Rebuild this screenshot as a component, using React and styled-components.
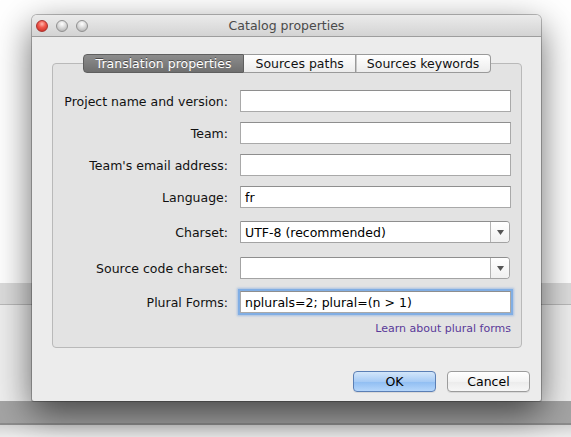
import React from 'react';
import styled, { createGlobalStyle } from 'styled-components';

const GlobalStyle = createGlobalStyle`
  html, body {
    margin: 0;
    padding: 0;
  }
  body {
    width: 571px;
    height: 437px;
    overflow: hidden;
    font-family: "DejaVu Sans", "Liberation Sans", sans-serif;
    background: linear-gradient(
      to bottom,
      #ffffff 0px,
      #ffffff 283px,
      #dcdcdc 283px,
      #dcdcdc 304px,
      #b9b9b9 304px,
      #b9b9b9 305px,
      #eeeeee 305px,
      #eeeeee 401px,
      #a4a4a4 401px,
      #a4a4a4 423px,
      #8c8c8c 423px,
      #8c8c8c 425px,
      #d4d4d4 425px,
      #ececec 437px
    );
  }
`;

const Desktop = styled.div`
  padding: 15px 0 0 32px;
`;

const Window = styled.div`
  width: 509px;
  height: 386px;
  display: flex;
  flex-direction: column;
  background: #ececec;
  border-radius: 5px 5px 2px 2px;
  box-shadow: 0 0 0 1px rgba(0, 0, 0, 0.25), 0 12px 36px rgba(0, 0, 0, 0.6);
  overflow: hidden;
`;

const TitleBar = styled.div`
  height: 22px;
  flex: none;
  display: flex;
  align-items: center;
  position: relative;
  padding-left: 4px;
  background: linear-gradient(to bottom, #ebebeb, #d3d3d3);
  border-bottom: 1px solid #9d9d9d;
  box-sizing: border-box;
`;

const Lights = styled.div`
  display: flex;
  gap: 8px;
`;

const Light = styled.span`
  width: 12px;
  height: 12px;
  border-radius: 50%;
  box-sizing: border-box;
  border: 1px solid ${(p) => (p.$red ? '#a8312e' : '#8f8f8f')};
  background: ${(p) =>
    p.$red
      ? 'radial-gradient(circle at 50% 30%, #ffb6ae 0%, #f15a4e 40%, #c5241c 100%)'
      : 'radial-gradient(circle at 50% 30%, #ffffff 0%, #d9d9d9 45%, #a9a9a9 100%)'};
`;

const Title = styled.div`
  position: absolute;
  left: 0;
  right: 0;
  text-align: center;
  font-size: 12.5px;
  color: #4a4a4a;
  pointer-events: none;
`;

const Body = styled.div`
  flex: 1;
  display: flex;
  flex-direction: column;
  padding: 17px 11px 9px 20px;
`;

const Tabs = styled.div`
  display: flex;
  justify-content: center;
  margin-bottom: -10px;
  margin-right: 8px;
  position: relative;
  z-index: 1;
`;

const Tab = styled.div`
  height: 19px;
  box-sizing: border-box;
  display: flex;
  align-items: center;
  justify-content: center;
  font-size: 12.5px;
  padding: 0 ${(p) => p.$pad}px;
  border: 1px solid ${(p) => (p.$active ? '#5f5f5f' : '#9a9a9a')};
  border-left-width: ${(p) => (p.$first ? 1 : 0)}px;
  color: ${(p) => (p.$active ? '#ffffff' : '#111')};
  text-shadow: ${(p) => (p.$active ? '0 -1px 0 rgba(0,0,0,0.45)' : 'none')};
  background: ${(p) =>
    p.$active
      ? 'linear-gradient(to bottom, #8d8d8d, #6f6f6f)'
      : 'linear-gradient(to bottom, #ffffff, #ececec)'};
  border-radius: ${(p) => (p.$first ? '4px 0 0 4px' : p.$last ? '0 4px 4px 0' : '0')};
  box-shadow: ${(p) => (p.$sep ? 'inset 1px 0 0 #c8c8c8' : 'none')};
`;

const TabBox = styled.div`
  width: 470px;
  height: 285px;
  box-sizing: border-box;
  border: 1px solid #b9b9b9;
  border-radius: 4px;
  background: #e3e3e3;
  padding: 26px 10px 0 0;
  display: flex;
  flex-direction: column;
`;

const Row = styled.div`
  display: flex;
  align-items: center;
  margin-top: ${(p) => p.$space || 0}px;
`;

const Label = styled.label`
  width: 175px;
  margin-right: 12px;
  text-align: right;
  font-size: 12.5px;
  color: #111;
`;

const TextField = styled.div`
  width: 271px;
  height: 22px;
  box-sizing: border-box;
  display: flex;
  align-items: center;
  padding: 0 4px;
  background: #ffffff;
  border: 1px solid #a9a9a9;
  border-top-color: #8e8e8e;
  font-size: 12.5px;
  color: #000;
  box-shadow: ${(p) => (p.$focus ? '0 0 0 2px #81aee4, 0 0 2px 3px rgba(110,160,225,0.5)' : 'none')};
`;

const Select = styled.div`
  width: 270px;
  height: 22px;
  box-sizing: border-box;
  display: flex;
  align-items: stretch;
  background: #ffffff;
  border: 1px solid #a3a3a3;
  border-top-color: #8e8e8e;
  border-radius: 0 4px 4px 0;
  font-size: 12.5px;
  color: #000;
`;

const SelectValue = styled.div`
  flex: 1;
  display: flex;
  align-items: center;
  padding: 0 4px;
`;

const SelectArrow = styled.div`
  width: 18px;
  border-left: 1px solid #b3b3b3;
  background: linear-gradient(to bottom, #ffffff, #f0f0f0);
  border-radius: 0 3px 3px 0;
  display: flex;
  align-items: center;
  justify-content: center;
`;

const HelpLink = styled.a`
  align-self: flex-end;
  margin-top: 9px;
  font-size: 11px;
  color: #5a3a99;
  text-decoration: none;
`;

const Buttons = styled.div`
  margin-top: auto;
  display: flex;
  justify-content: flex-end;
  gap: 11px;
`;

const Button = styled.button`
  width: 83px;
  height: 21px;
  box-sizing: border-box;
  font-family: inherit;
  font-size: 12.5px;
  color: #000;
  border-radius: 4px;
  border: 1px solid ${(p) => (p.$primary ? '#5b7fb5' : '#9c9c9c')};
  background: ${(p) =>
    p.$primary
      ? 'linear-gradient(to bottom, #d3e6fa 0%, #a7cbf5 50%, #8fbdf2 51%, #b5d6fb 100%)'
      : 'linear-gradient(to bottom, #ffffff 0%, #f3f3f3 50%, #ebebeb 51%, #f7f7f7 100%)'};
  box-shadow: 0 1px 0 rgba(0, 0, 0, 0.08);
  padding: 0;
`;

const Arrow = () => (
  <svg width="7" height="5" viewBox="0 0 7 5">
    <path d="M0 0 H7 L3.5 5 Z" fill="#555" />
  </svg>
);

const fields = [
  { label: 'Project name and version:', value: '' },
  { label: 'Team:', value: '', space: 10 },
  { label: "Team's email address:", value: '', space: 10 },
  { label: 'Language:', value: 'fr', space: 10 },
];

export default function App() {
  return (
    <>
      <GlobalStyle />
      <Desktop>
        <Window>
          <TitleBar>
            <Lights>
              <Light $red />
              <Light />
              <Light />
            </Lights>
            <Title>Catalog properties</Title>
          </TitleBar>
          <Body>
            <Tabs>
              <Tab $active $first $pad={12}>Translation properties</Tab>
              <Tab $pad={11}>Sources paths</Tab>
              <Tab $last $sep $pad={11}>Sources keywords</Tab>
            </Tabs>
            <TabBox>
              {fields.map((f) => (
                <Row key={f.label} $space={f.space}>
                  <Label>{f.label}</Label>
                  <TextField>{f.value}</TextField>
                </Row>
              ))}
              <Row $space={13}>
                <Label>Charset:</Label>
                <Select>
                  <SelectValue>UTF-8 (recommended)</SelectValue>
                  <SelectArrow><Arrow /></SelectArrow>
                </Select>
              </Row>
              <Row $space={14}>
                <Label>Source code charset:</Label>
                <Select>
                  <SelectValue />
                  <SelectArrow><Arrow /></SelectArrow>
                </Select>
              </Row>
              <Row $space={12}>
                <Label>Plural Forms:</Label>
                <TextField $focus>nplurals=2; plural=(n &gt; 1)</TextField>
              </Row>
              <HelpLink href="#">Learn about plural forms</HelpLink>
            </TabBox>
            <Buttons>
              <Button $primary>OK</Button>
              <Button>Cancel</Button>
            </Buttons>
          </Body>
        </Window>
      </Desktop>
    </>
  );
}
